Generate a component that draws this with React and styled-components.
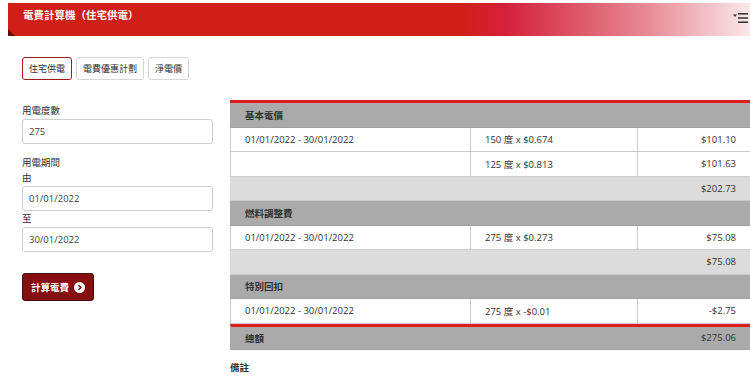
import React from "react";
import styled, { createGlobalStyle } from "styled-components";

const GlobalStyle = createGlobalStyle`
  body {
    margin: 0;
    background: #fff;
    font-family: "Open Sans", "Noto Sans CJK TC", sans-serif;
    color: #333;
  }
`;

const Header = styled.div`
  position: relative;
  margin: 3px 0 0 8px;
  height: 33px;
  padding: 4px 0 0 15px;
  box-sizing: border-box;
  background: linear-gradient(
    to right,
    #cf1f17 0%,
    #cf1f17 61%,
    #d4213a 67%,
    #e5848f 85%,
    #fbe7ea 100%
  );
  color: #fff;
  font-size: 10.5px;
  font-weight: bold;
  line-height: 16px;
  &::after {
    content: "";
    position: absolute;
    left: 0;
    bottom: 0;
    border-left: 7px solid #6e0a0a;
    border-top: 7px solid transparent;
  }
`;

const MenuIcon = styled.svg`
  position: absolute;
  right: 2px;
  top: 9px;
`;

const Tabs = styled.div`
  display: flex;
  gap: 4px;
  margin: 21px 0 0 22px;
`;

const Tab = styled.div`
  height: 23px;
  box-sizing: border-box;
  padding: 0 6px;
  display: flex;
  align-items: center;
  font-size: 9px;
  border: 1px solid ${(p) => (p.$active ? "#a3191c" : "#d6d6d6")};
  border-radius: 3px;
  background: #fff;
`;

const Content = styled.div`
  display: flex;
  gap: 17px;
  margin: 20px 0 0 22px;
`;

const Form = styled.div`
  width: 191px;
  padding-top: 3px;
  display: flex;
  flex-direction: column;
`;

const Label = styled.div`
  font-size: 9.5px;
  line-height: 15px;
  margin-top: ${(p) => p.$gap || 0}px;
`;

const Input = styled.div`
  height: 25px;
  box-sizing: border-box;
  margin-top: 1px;
  border: 1px solid #cfcfcf;
  border-radius: 3px;
  padding: 0 6px;
  display: flex;
  align-items: center;
  font-size: 9.5px;
  color: #444;
`;

const Button = styled.div`
  margin-top: 21px;
  align-self: flex-start;
  height: 28px;
  box-sizing: border-box;
  padding: 0 8px;
  display: flex;
  align-items: center;
  gap: 5px;
  background: #870e0e;
  border: 1px solid #3a1010;
  border-radius: 3px;
  color: #fff;
  font-size: 9.5px;
  font-weight: bold;
`;

const Circle = styled.span`
  width: 11px;
  height: 11px;
  border-radius: 50%;
  background: #fff;
  display: flex;
  align-items: center;
  justify-content: center;
`;

const Result = styled.div`
  flex: 1;
  font-size: 9.5px;
`;

const Table = styled.div`
  border-top: 3px solid #dd1f1f;
`;

const Row = styled.div`
  display: grid;
  grid-template-columns: 240px 167px 1fr;
  height: 24.5px;
  box-sizing: border-box;
  background: ${(p) =>
    p.$kind === "head" ? "#aaaaaa" : p.$kind === "sub" ? "#dcdcdc" : "#fff"};
  border-bottom: 1px solid ${(p) => (p.$kind === "head" ? "#a0a0a0" : "#cccccc")};
  border-left: 1px solid ${(p) => (p.$kind === "line" ? "#cccccc" : "transparent")};
  border-top: ${(p) => (p.$red ? "3px solid #dd1f1f" : "none")};
  height: ${(p) => (p.$red ? "26.5px" : "24.5px")};
  font-weight: ${(p) => (p.$kind === "head" ? "bold" : "normal")};
`;

const Cell = styled.div`
  display: flex;
  align-items: center;
  padding: 0 14px;
  grid-column: ${(p) => p.$span || "auto"};
  justify-content: ${(p) => (p.$right ? "flex-end" : "flex-start")};
  border-right: ${(p) => (p.$divide ? "1px solid #cccccc" : "none")};
`;

const Note = styled.div`
  margin-top: 10px;
  font-weight: bold;
  font-size: 9.5px;
`;

const sections = [
  {
    title: "基本電價",
    lines: [
      ["01/01/2022 - 30/01/2022", "150 度 x $0.674", "$101.10"],
      ["", "125 度 x $0.813", "$101.63"],
    ],
    subtotal: "$202.73",
  },
  {
    title: "燃料調整費",
    lines: [["01/01/2022 - 30/01/2022", "275 度 x $0.273", "$75.08"]],
    subtotal: "$75.08",
  },
  {
    title: "特別回扣",
    lines: [["01/01/2022 - 30/01/2022", "275 度 x -$0.01", "-$2.75"]],
  },
];

export default function App() {
  return (
    <>
      <GlobalStyle />
      <Header>
        電費計算機（住宅供電）
        <MenuIcon width="16" height="12" viewBox="0 0 16 12">
          <path d="M1 2.5h4L3 5z" fill="#333" />
          <rect x="6" y="1" width="10" height="1.6" fill="#3a3a3a" />
          <rect x="6" y="5.2" width="10" height="1.6" fill="#3a3a3a" />
          <rect x="6" y="9.4" width="10" height="1.6" fill="#3a3a3a" />
        </MenuIcon>
      </Header>
      <Tabs>
        <Tab $active>住宅供電</Tab>
        <Tab>電費優惠計劃</Tab>
        <Tab>淨電價</Tab>
      </Tabs>
      <Content>
        <Form>
          <Label>用電度數</Label>
          <Input>275</Input>
          <Label $gap={11}>用電期間</Label>
          <Label>由</Label>
          <Input>01/01/2022</Input>
          <Label>至</Label>
          <Input>30/01/2022</Input>
          <Button>
            計算電費
            <Circle>
              <svg width="7" height="7" viewBox="0 0 8 8">
                <path d="M3 1.5L5.5 4 3 6.5" stroke="#870e0e" strokeWidth="1.8" fill="none" />
              </svg>
            </Circle>
          </Button>
        </Form>
        <Result>
          <Table>
            {sections.map((s) => (
              <React.Fragment key={s.title}>
                <Row $kind="head">
                  <Cell $span="1 / 4">{s.title}</Cell>
                </Row>
                {s.lines.map((l, i) => (
                  <Row $kind="line" key={i}>
                    <Cell $divide>{l[0]}</Cell>
                    <Cell $divide>{l[1]}</Cell>
                    <Cell $right>{l[2]}</Cell>
                  </Row>
                ))}
                {s.subtotal && (
                  <Row $kind="sub">
                    <Cell $span="3 / 4" $right>{s.subtotal}</Cell>
                  </Row>
                )}
              </React.Fragment>
            ))}
            <Row $kind="head" $red>
              <Cell>總額</Cell>
              <Cell />
              <Cell $right style={{ fontWeight: "normal" }}>$275.06</Cell>
            </Row>
          </Table>
          <Note>備註</Note>
        </Result>
      </Content>
    </>
  );
}
